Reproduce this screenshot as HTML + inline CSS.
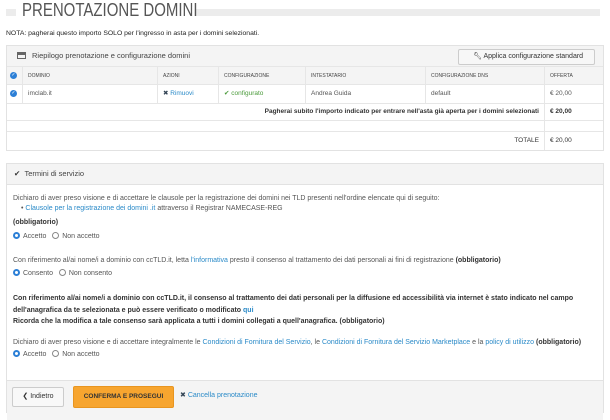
<!DOCTYPE html>
<html><head><meta charset="utf-8"><style>
*{box-sizing:border-box;margin:0;padding:0}
body{width:610px;height:410px;background:#fff;font-family:"Liberation Sans",sans-serif;font-size:7px;color:#555;position:relative;overflow:hidden}
.a{position:absolute;white-space:nowrap}
a,.l{color:#2a8ac8}
b{color:#333}
.panel{position:absolute;border:1px solid #e2e2e2;}
.hd{position:absolute;left:0;right:0;top:0;background:#f4f4f4;border-bottom:1px solid #e2e2e2}
table{border-collapse:collapse;position:absolute;left:-1px;top:20px;width:598px;table-layout:fixed}
td{border:1px solid #e6e6e6;padding:0 5px;font-size:6.5px;line-height:8px;overflow:hidden;white-space:nowrap}
.th td{background:#f4f4f4;font-size:5px;color:#444}
.cb{display:inline-block;width:7px;height:7px;border-radius:50%;background:#2c7fd6;color:#fff;font-size:5px;text-align:center;line-height:7px;vertical-align:middle}
.r{display:inline-block;width:7px;height:7px;border-radius:50%;border:1px solid #888;vertical-align:-1px;margin-right:3px}
.r.on{border:2px solid #2c7fd6}
</style></head><body>
<div class="a" style="left:6px;top:9px;width:594px;height:7px;background:#ececec"></div>
<div class="a" style="left:16px;top:0;width:180px;height:22px;background:#fff"></div>
<div class="a" style="left:22px;top:1px;font-size:15px;color:#555;line-height:20px;transform:scaleY(1.22);transform-origin:0 50%">PRENOTAZIONE DOMINI</div>
<div class="a" style="left:6px;top:30px;font-size:6.8px;color:#222">NOTA: pagherai questo importo SOLO per l'ingresso in asta per i domini selezionati.</div>

<div class="panel" style="left:6px;top:45px;width:598px;height:106px;overflow:hidden">
 <div class="hd" style="height:21px"></div>
 <div class="a" style="left:10px;top:6px;width:9px;height:7px;border:1px solid #666;border-top:3px solid #666"></div>
 <div class="a" style="left:25px;top:5px;font-size:7.5px;color:#444">Riepilogo prenotazione e configurazione domini</div>
 <div class="a" style="left:451px;top:3px;width:137px;height:16px;border:1px solid #ccc;background:#f7f7f7;border-radius:2px;font-size:7px;color:#333;line-height:14px;padding-left:14px">🔧︎ Applica configurazione standard</div>
 <table>
  <colgroup><col style="width:16px"><col style="width:135px"><col style="width:61px"><col style="width:87px"><col style="width:120px"><col style="width:119px"><col style="width:60px"></colgroup>
  <tr class="th" style="height:18px"><td style="padding:0 3px"><span class="cb">✓</span></td><td>DOMINIO</td><td>AZIONI</td><td>CONFIGURAZIONE</td><td>INTESTATARIO</td><td>CONFIGURAZIONE DNS</td><td>OFFERTA</td></tr>
  <tr style="height:19px"><td style="padding:0 3px"><span class="cb">✓</span></td><td>imclab.it</td><td class="l"><span style="color:#345">✖</span> Rimuovi</td><td style="color:#4a9a3a">✔ configurato</td><td>Andrea Guida</td><td>default</td><td>€ 20,00</td></tr>
  <tr style="height:17px"><td colspan="6" style="text-align:right;font-weight:bold;color:#333">Pagherai subito l'importo indicato per entrare nell'asta già aperta per i domini selezionati</td><td style="font-weight:bold;color:#333">€ 20,00</td></tr>
  <tr style="height:11px"><td colspan="6"></td><td></td></tr>
  <tr style="height:19px"><td colspan="6" style="text-align:right;color:#333">TOTALE</td><td style="color:#333">€ 20,00</td></tr>
 </table>
</div>

<div class="panel" style="left:6px;top:163px;width:598px;height:250px">
 <div class="hd" style="height:21px"></div>
 <div class="a" style="left:7px;top:5px;font-size:7.5px;color:#333">✔ <span style="color:#444">&nbsp;Termini di servizio</span></div>
 <div class="hd" style="top:216px;height:40px;border-top:1px solid #e2e2e2;border-bottom:none"></div>
</div>
<div class="a" style="left:13px;top:195px">Dichiaro di aver preso visione e di accettare le clausole per la registrazione dei domini nei TLD presenti nell'ordine elencate qui di seguito:</div>
<div class="a" style="left:21px;top:205px">• <span class="l">Clausole per la registrazione dei domini .it</span> attraverso il Registrar NAMECASE-REG</div>
<div class="a" style="left:13px;top:219px;font-weight:bold;color:#333">(obbligatorio)</div>
<div class="a" style="left:13px;top:232px"><span class="r on"></span>Accetto &nbsp;&nbsp;<span class="r"></span>Non accetto</div>
<div class="a" style="left:13px;top:257px">Con riferimento al/ai nome/i a dominio con ccTLD.it, letta <span class="l">l'informativa</span> presto il consenso al trattamento dei dati personali ai fini di registrazione <b>(obbligatorio)</b></div>
<div class="a" style="left:13px;top:269px"><span class="r on"></span>Consento &nbsp;&nbsp;<span class="r"></span>Non consento</div>
<div class="a" style="left:13px;top:293px;font-weight:bold;color:#333;line-height:11.5px">Con riferimento al/ai nome/i a dominio con ccTLD.it, il consenso al trattamento dei dati personali per la diffusione ed accessibilità via internet è stato indicato nel campo<br>dell'anagrafica da te selezionata e può essere verificato o modificato <span class="l">qui</span><br>Ricorda che la modifica a tale consenso sarà applicata a tutti i domini collegati a quell'anagrafica. (obbligatorio)</div>
<div class="a" style="left:13px;top:339px">Dichiaro di aver preso visione e di accettare integralmente le <span class="l">Condizioni di Fornitura del Servizio</span>, le <span class="l">Condizioni di Fornitura del Servizio Marketplace</span> e la <span class="l">policy di utilizzo</span> <b>(obbligatorio)</b></div>
<div class="a" style="left:13px;top:350px"><span class="r on"></span>Accetto &nbsp;&nbsp;<span class="r"></span>Non accetto</div>

<div class="a" style="left:12px;top:387px;width:52px;height:20px;border:1px solid #ccc;background:#f8f8f8;border-radius:2px;color:#333;font-size:7px;line-height:18px;text-align:center">❮ Indietro</div>
<div class="a" style="left:73px;top:386px;width:101px;height:22px;background:#f7a52f;border:1px solid #e89520;border-radius:2px;color:#333;font-weight:bold;font-size:6.5px;line-height:20px;text-align:center">CONFERMA E PROSEGUI</div>
<div class="a l" style="left:180px;top:391px"><span style="color:#345">✖</span> Cancella prenotazione</div>
</body></html>
